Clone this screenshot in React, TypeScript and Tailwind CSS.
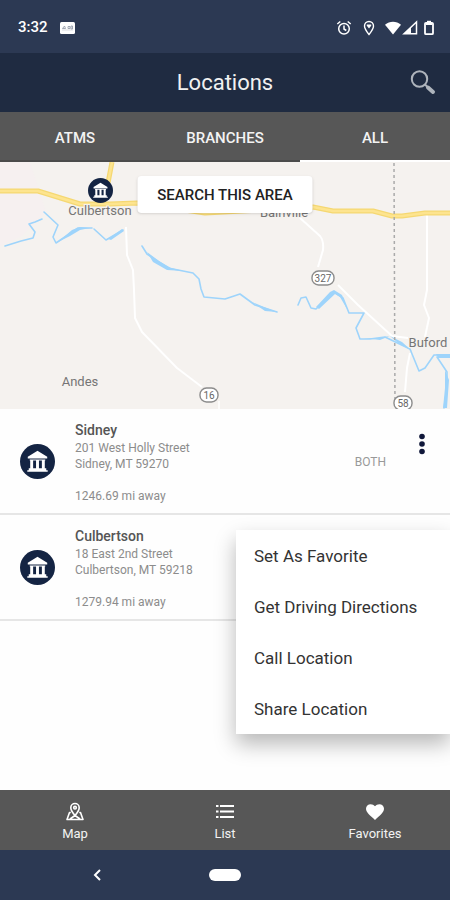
import { useState } from 'react';
import { clsx } from 'clsx';

interface Location {
    name: string;
    street: string;
    city: string;
    distance: string;
    kind?: string;
}

const LOCATIONS: Location[] = [
    { name: 'Sidney', street: '201 West Holly Street', city: 'Sidney, MT 59270', distance: '1246.69 mi away', kind: 'BOTH' },
    { name: 'Culbertson', street: '18 East 2nd Street', city: 'Culbertson, MT 59218', distance: '1279.94 mi away' },
];

const TABS = ['ATMS', 'BRANCHES', 'ALL'];
const MENU_ITEMS = ['Set As Favorite', 'Get Driving Directions', 'Call Location', 'Share Location'];

const BankGlyph = () => (
    <>
        <circle cx="18" cy="18" r="18" fill="#142443" />
        <path d="M18 7 28 13v2H8v-2z" fill="#fff" />
        <path d="M10 16h16v1H10zM10.5 17h3v8h-3zM16.5 17h3v8h-3zM22.5 17h3v8h-3zM9 25h18v2H9zM7.500 27h21v1.500h-21z" fill="#fff" />
    </>
);

const StatusBar = () => (
    <div className="flex h-[53px] items-center bg-[#2c3953] pl-[18px] pr-[15px] pt-0.5 text-white">
        <span className="text-[15px] font-medium">3:32</span>
        <svg className="ml-3" width="15" height="12" viewBox="0 0 15 12">
            <rect width="15" height="12" rx="1.500" fill="#fff" />
            <path d="M2.500 6.500 4.500 4l1 2.500zM8 4.500h2v2H8zM11 4h1.500v3H11z" fill="none" stroke="#8d95a3" strokeWidth=".8" />
            <path d="M2 8h11" stroke="#c3c7cf" strokeWidth=".6" />
        </svg>
        <div className="ml-auto flex items-center">
            <svg width="16" height="16" viewBox="0 0 16 16" fill="none" stroke="#fff" strokeWidth="1.500">
                <circle cx="8" cy="8.800" r="5.300" />
                <path d="M8 5.500v3.500l2.300 1.500M1.300 4 4.300 1.500M14.700 4l-3-2.500" />
            </svg>
            <svg className="ml-2.5" width="14" height="16" viewBox="0 0 14 16">
                <path d="M7 14.500C4 10.800 2.500 8.500 2.500 6a4.500 4.500 0 0 1 9 0c0 2.500-1.500 4.800-4.500 8.500z" fill="none" stroke="#fff" strokeWidth="1.400" />
                <path d="M4.800 4.500h4.400v1.300L7 8.500 4.800 5.800z" fill="#fff" />
            </svg>
            <svg className="ml-2" width="18" height="16" viewBox="0 0 18 16">
                <path d="M1 4.800C5.500.8 12.500.8 17 4.800L9 14.500z" fill="#fff" />
            </svg>
            <svg width="17" height="16" viewBox="0 0 17 16">
                <path d="M2 13.700 14.500 2v11.700z" fill="none" stroke="#fff" strokeWidth="1.500" />
                <path d="M2 13.700 9 7v6.700z" fill="#fff" />
            </svg>
            <svg className="ml-1" width="12" height="16" viewBox="0 0 12 16">
                <path d="M4 .800h4v1.700H4z" fill="#fff" />
                <rect x="2" y="2.800" width="8" height="11.400" rx="1" fill="none" stroke="#fff" strokeWidth="1.800" />
                <path d="M3 3h6v2H3z" fill="#fff" />
            </svg>
        </div>
    </div>
);

const Shield = ({ x, y, w, label }: { x: number; y: number; w: number; label: string }) => (
    <g>
        <rect x={x - w / 2} y={y - 7} width={w} height="14" rx="6.500" fill="#fff" stroke="#8c8c8c" strokeWidth="1.400" />
        <text x={x} y={y + 4} textAnchor="middle" fontSize="10" fill="#666">{label}</text>
    </g>
);

const LocationMap = () => (
    <div className="relative h-[247px] overflow-hidden bg-[#f5f2ef]">
        <svg className="h-full w-full" viewBox="0 0 450 247" preserveAspectRatio="xMidYMid slice">
            <path d="M0 0h30l16 50L22 74 0 84z" fill="#f6f0f0" />
            {/* minor roads */}
            <g fill="none" stroke="#fff" strokeWidth="2" strokeLinejoin="round">
                <path d="M126 65l1 28 6 15 1 20 1 28 7 14 35 36 25 19" />
                <path d="M300 56l20 18q4 5 3 14l-5 17M338 123l20 20 34 31 16 2" />
                <path d="M427 51v77l-3 15 5 13-4 19M410 191l-3 15-2 24" />
                <path d="M219 239v8" strokeWidth="1.500" />
            </g>
            {/* highway */}
            <g fill="none" strokeLinejoin="round">
                <path d="M112 0 108 21M0 29h38l42 13h30l27-1 68 10 108-6 20 4h40l19 5h10l23-3h25" stroke="#f5d872" strokeWidth="5" />
                <path d="M112 0 108 21M0 29h38l42 13h30l27-1 68 10 108-6 20 4h40l19 5h10l23-3h25" stroke="#fde48f" strokeWidth="2.500" />
            </g>
            {/* rivers */}
            <g fill="none" stroke="#9ed4fb" strokeWidth="1.600" strokeLinejoin="round" strokeLinecap="round">
                <path d="M5 84l16-5 12-3 2-6-6-8 6-2 7-3" />
                <path d="M44 50l14 13-5 12 3 6 22-15h14M94 67l12 11 17-10" />
                <path d="M142 84l5 8 21 14 25 5 6 6 2 10 3 8 21 2 15-5 15 11 22 7" />
                <path d="M298 143l3-7 5-1 5 11 5 1 18-17 9 6 6 15h15l-8 15 4 11h10l15-2 25 12 9 22 6-3 9-13h16" />
                <path d="M437 195l10 15v16l-3 20" />
            </g>
            <g fill="#9ed4fb">
                <path d="M58 80l14-12 8-3 10 1-10 2-10 6zM108 77l14-10 2 2-13 9zM147 90l12 9 12 7 13 3-17-1-14-8zM252 140l12 5 13 5-12-1zM316 145l14-15 4-2 8 5 5 14-7-12-5-3-16 15zM364 176l14 0 12-2-10 4zM390 174l12 6 10 9-14-8zM436 192h14v4h-12zM445 208l4 10-2 28h-4l2-20z" />
            </g>
            <path d="M394 1l1 246" stroke="#aaa" strokeWidth="1.500" strokeDasharray="3 3" />
            <Shield x={323} y={116} w={22} label="327" />
            <Shield x={209} y={233} w={18} label="16" />
            <Shield x={403} y={241} w={18} label="58" />
            <g fontSize="13" fill="#757575" textAnchor="middle" stroke="#f5f2ef" strokeWidth="2" paintOrder="stroke">
                <text x="100" y="53">Culbertson</text>
                <text x="284" y="55">Bainville</text>
                <text x="80" y="224">Andes</text>
                <text x="428" y="185">Buford</text>
            </g>
            <svg x="88" y="16" width="25" height="25" viewBox="0 0 36 36">
                <BankGlyph />
            </svg>
        </svg>
        <button className="absolute left-1/2 top-3.5 h-[37px] w-[175px] -translate-x-1/2 rounded bg-white pt-0.5 text-[15px] font-medium text-[#222] shadow-sm">
            SEARCH THIS AREA
        </button>
    </div>
);

const LocationRow = ({ location, onMenu }: { location: Location; onMenu: () => void }) => (
    <li className="flex h-[106px] items-start border-b-2 border-[#e6e6e6] pl-5">
        <svg className="mt-[35px] shrink-0" width="35" height="35" viewBox="0 0 36 36">
            <BankGlyph />
        </svg>
        <div className="ml-5 mt-3 flex-1 text-xs text-[#8c8c8c]">
            <h2 className="text-[14px] leading-[19px] font-medium text-[#555]">{location.name}</h2>
            <p>{location.street}</p>
            <p>{location.city}</p>
            <p className="mt-4">{location.distance}</p>
        </div>
        {location.kind && <span className="mt-[45px] text-xs text-[#999]">{location.kind}</span>}
        <button aria-label={`Options for ${location.name}`} onClick={onMenu} className="ml-6 mr-4 mt-[21px] flex h-7 w-6 items-center justify-center">
            <svg width="8" height="24" viewBox="0 0 8 24" fill="#10183a">
                <circle cx="4" cy="4.500" r="2.800" />
                <circle cx="4" cy="12" r="2.800" />
                <circle cx="4" cy="19.500" r="2.800" />
            </svg>
        </button>
    </li>
);

const NAV = [
    {
        label: 'Map',
        icon: (
            <g fill="none" stroke="#fff" strokeWidth="1.600" strokeLinejoin="round">
                <path d="M10 13.500C7 10 5.800 8 5.800 5.700a4.200 4.200 0 0 1 8.400 0C14.200 8 13 10 10 13.500z" />
                <circle cx="10" cy="5.700" r="1.300" />
                <path d="M5.800 10.500H4.500L2 17.500h16l-2.500-7h-1.300M5 17l5-3.500 5 3.500" />
            </g>
        ),
    },
    { label: 'List', icon: <path d="M1 3h2.500v2H1zM5 3h14v2H5zM1 8.500h2.500v2H1zM5 8.500h14v2H5zM1 14h2.500v2H1zM5 14h14v2H5z" fill="#fff" /> },
    { label: 'Favorites', icon: <path d="M10 18 8.500 16.600C3.800 12.400 1 9.800 1 6.800 1 4.200 3 2.200 5.700 2.200c1.600 0 3.200.8 4.300 2 1.100-1.200 2.700-2 4.300-2C17 2.200 19 4.200 19 6.800c0 3-2.800 5.600-7.500 9.800z" fill="#fff" /> },
];

export default function App() {
    const [tab, setTab] = useState('ALL');
    const [menuOpen, setMenuOpen] = useState(true);

    return (
        <div className="flex min-h-screen flex-col overflow-x-hidden bg-[#fefefe] font-['Roboto',sans-serif]">
            <StatusBar />
            <header className="relative flex h-[59px] items-center justify-center bg-[#1f2b41]">
                <h1 className="text-[22px] text-[#f1f1f1]">Locations</h1>
                <button aria-label="Search" className="absolute right-3.5 top-4">
                    <svg width="26" height="26" viewBox="0 0 26 26" fill="none">
                        <circle cx="9.500" cy="10" r="7.700" stroke="#aeb4bc" strokeWidth="2" />
                        <path d="M15 15.500l3 3" stroke="#aeb4bc" strokeWidth="2" />
                        <path d="M18 18.500l5 4.500" stroke="#aeb4bc" strokeWidth="4" strokeLinecap="round" />
                    </svg>
                </button>
            </header>
            <nav className="grid h-[50px] grid-cols-3 bg-[#575757]">
                {TABS.map(t => (
                    <button
                        key={t}
                        onClick={() => setTab(t)}
                        className={clsx('border-b-2 pt-1 text-[15px] font-medium text-[#f3f3f3]', tab === t ? 'border-white' : 'border-[#4b4b4b]')}
                    >
                        {t}
                    </button>
                ))}
            </nav>
            <LocationMap />
            <main className="relative flex-1">
                <ul>
                    {LOCATIONS.map(l => (
                        <LocationRow key={l.name} location={l} onMenu={() => setMenuOpen(!menuOpen)} />
                    ))}
                </ul>
                {menuOpen && (
                    <div role="menu" className="absolute right-0 top-[121px] w-[214px] bg-white shadow-[0_10px_20px_rgba(0,0,0,0.28)]">
                        {MENU_ITEMS.map(item => (
                            <button key={item} role="menuitem" className="block h-[51px] w-full pl-[18px] pt-0.5 text-left text-[17px] text-[#333]">
                                {item}
                            </button>
                        ))}
                    </div>
                )}
            </main>
            <nav className="grid h-[60px] grid-cols-3 bg-[#575757]">
                {NAV.map(n => (
                    <button key={n.label} className="flex flex-col items-center pt-3 text-[13px] text-[#f3f3f3]">
                        <svg width="20" height="20" viewBox="0 0 20 20">{n.icon}</svg>
                        <span className="mt-0.5">{n.label}</span>
                    </button>
                ))}
            </nav>
            <footer className="relative flex h-[50px] items-center justify-center bg-[#2c3953]">
                <button aria-label="Back" className="absolute left-[90px] top-[18px]">
                    <svg width="14" height="14" viewBox="0 0 14 14">
                        <path d="M10 2 5 7l5 5" fill="none" stroke="#fff" strokeWidth="2" />
                    </svg>
                </button>
                <button aria-label="Home" className="h-3 w-8 rounded-full bg-white" />
            </footer>
        </div>
    );
}
